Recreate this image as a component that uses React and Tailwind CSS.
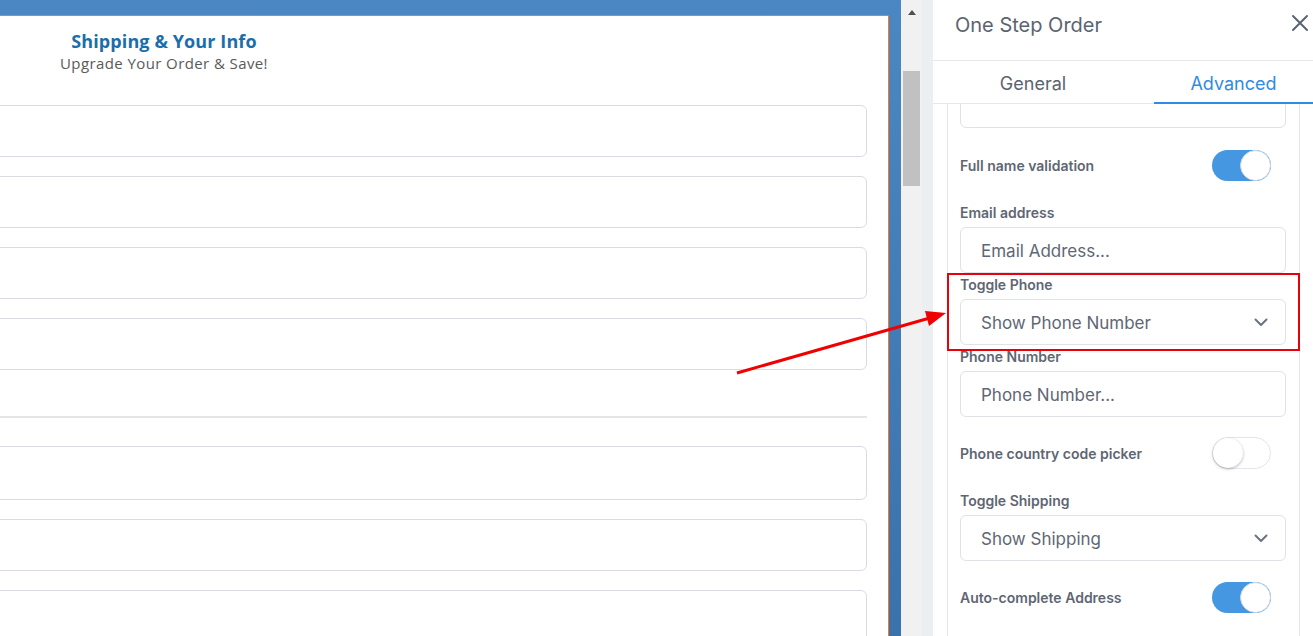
import React from "react";

function Toggle({ on }) {
  return on ? (
    <div className="w-[59px] h-[31px] rounded-full bg-[#4497e0] flex items-center justify-end shrink-0">
      <div className="w-[31px] h-[31px] rounded-full bg-white border border-[#cdd6e2]" />
    </div>
  ) : (
    <div className="w-[59px] h-[32px] rounded-full bg-white border border-[#e3e6ea] flex items-center justify-start shrink-0">
      <div className="w-[30px] h-[30px] rounded-full bg-white shadow-[0_1px_3px_rgba(0,0,0,0.3)]" />
    </div>
  );
}

function Label({ children, className = "" }) {
  return (
    <div className={"h-[20px] flex items-center text-[14px] font-semibold text-[#5f6673] " + className}>
      {children}
    </div>
  );
}

function Field({ text, select, className = "" }) {
  return (
    <div className={"h-[46px] rounded-md border border-[#dfe2e6] flex items-center pl-[20px] pr-[17px] justify-between " + className}>
      <span className="text-[17px] text-[#5f6775] pt-[3px]">{text}</span>
      {select && (
        <svg width="14" height="9" viewBox="0 0 14 9" fill="none">
          <path d="M1.5 1.5 L7 7 L12.5 1.5" stroke="#6b7280" strokeWidth="2" strokeLinecap="round" strokeLinejoin="round" />
        </svg>
      )}
    </div>
  );
}

export default function App() {
  const ff = { fontFamily: "Inter, 'Noto Sans', sans-serif" };
  return (
    <div className="relative flex w-[1313px] h-[636px] overflow-hidden bg-white" style={ff}>
      {/* Left canvas */}
      <div className="w-[901px] h-full bg-gradient-to-b from-[#4b87c2] to-[#3a72ab] pt-[15px] pr-[12px] shrink-0">
        <div className="h-full bg-white border-t border-r border-[#f47a1f] pr-[21px]">
          <div className="w-[328px] text-center pt-[13px]">
            <div className="text-[18px] font-bold text-[#1b6ea9] leading-[24px] tracking-[0.1px]" style={{ fontFamily: "'Open Sans', sans-serif" }}>
              Shipping &amp; Your Info
            </div>
            <div className="text-[15px] text-[#5a5a5a] leading-[20px] tracking-[0.4px]" style={{ fontFamily: "'Open Sans', sans-serif" }}>
              Upgrade Your Order &amp; Save!
            </div>
          </div>
          <div className="-ml-[10px] mt-[32px] flex flex-col">
            <div className="h-[52px] rounded-md border border-[#d9dbe1]" />
            <div className="h-[52px] rounded-md border border-[#d9dbe1] mt-[19px]" />
            <div className="h-[52px] rounded-md border border-[#d9dbe1] mt-[19px]" />
            <div className="h-[52px] rounded-md border border-[#d9dbe1] mt-[19px]" />
            <div className="h-[2px] bg-[#e4e5e9] mt-[46px]" />
            <div className="h-[54px] rounded-md border border-[#d9dbe1] mt-[28px]" />
            <div className="h-[52px] rounded-md border border-[#d9dbe1] mt-[19px]" />
            <div className="h-[52px] rounded-md border border-[#d9dbe1] mt-[19px]" />
          </div>
        </div>
      </div>

      {/* Scrollbar */}
      <div className="w-[21px] h-full bg-[#f1f1f1] shrink-0 flex flex-col items-center">
        <div className="mt-[10px] w-0 h-0 border-l-[4px] border-r-[4px] border-b-[5px] border-l-transparent border-r-transparent border-b-[#505050]" />
        <div className="mt-[56px] w-[17px] h-[115px] bg-[#c1c1c1]" />
      </div>
      <div className="w-[11px] h-full bg-[#eceef1] shrink-0" />

      {/* Panel */}
      <div className="flex-1 h-full bg-white flex flex-col">
        <div className="h-[61px] flex items-center justify-between pl-[22px] pr-[4px] pb-[10px] border-b border-[#e5e7eb] shrink-0">
          <span className="text-[20px] text-[#5b6470]">One Step Order</span>
          <svg width="18" height="18" viewBox="0 0 18 18" className="mb-[4px]">
            <path d="M2 2 L16 16 M16 2 L2 16" stroke="#5b6470" strokeWidth="2" strokeLinecap="round" />
          </svg>
        </div>
        <div className="h-[43px] flex border-b border-[#e5e7eb] shrink-0">
          <div className="w-[200px] flex items-center justify-center text-[18px] text-[#5b6470] pt-[2px]">General</div>
          <div className="flex-1 ml-[21px] flex items-center justify-center text-[18px] text-[#2f8be6] border-b-2 border-[#2f8be6] -mb-px pt-[3px]">
            Advanced
          </div>
        </div>
        <div className="flex-1 overflow-hidden flex pl-[14px] pr-[13px]">
          <div className="w-[353px] border-l border-r border-[#e5e7eb] pl-[12px] pr-[13px] flex flex-col">
            <div className="h-[46px] rounded-md border border-[#dfe2e6] -mt-[22px] shrink-0" />
            <div className="mt-[22px] flex items-center justify-between pr-[15px]">
              <Label>Full name validation</Label>
              <Toggle on />
            </div>
            <Label className="mt-[21px]">Email address</Label>
            <Field text="Email Address..." className="mt-[5px]" />
            <Label className="mt-[1px]">Toggle Phone</Label>
            <Field text="Show Phone Number" select className="mt-[5px]" />
            <Label className="mt-[1px]">Phone Number</Label>
            <Field text="Phone Number..." className="mt-[5px]" />
            <div className="mt-[20px] flex items-center justify-between pr-[15px]">
              <Label>Phone country code picker</Label>
              <Toggle on={false} />
            </div>
            <Label className="mt-[21px]">Toggle Shipping</Label>
            <Field text="Show Shipping" select className="mt-[5px]" />
            <div className="mt-[21px] flex items-center justify-between pr-[15px]">
              <Label>Auto-complete Address</Label>
              <Toggle on />
            </div>
          </div>
        </div>
      </div>

      {/* Annotation overlay */}
      <div className="absolute left-[947px] top-[273px] w-[353px] h-[78px] border-2 border-[#e8000b] pointer-events-none" />
      <svg className="absolute left-0 top-0 pointer-events-none" width="1313" height="636">
        <line x1="737" y1="373" x2="928" y2="318.5" stroke="#f00000" strokeWidth="3" />
        <polygon points="946,313 925,311 929,326" fill="#f00000" />
      </svg>
    </div>
  );
}
